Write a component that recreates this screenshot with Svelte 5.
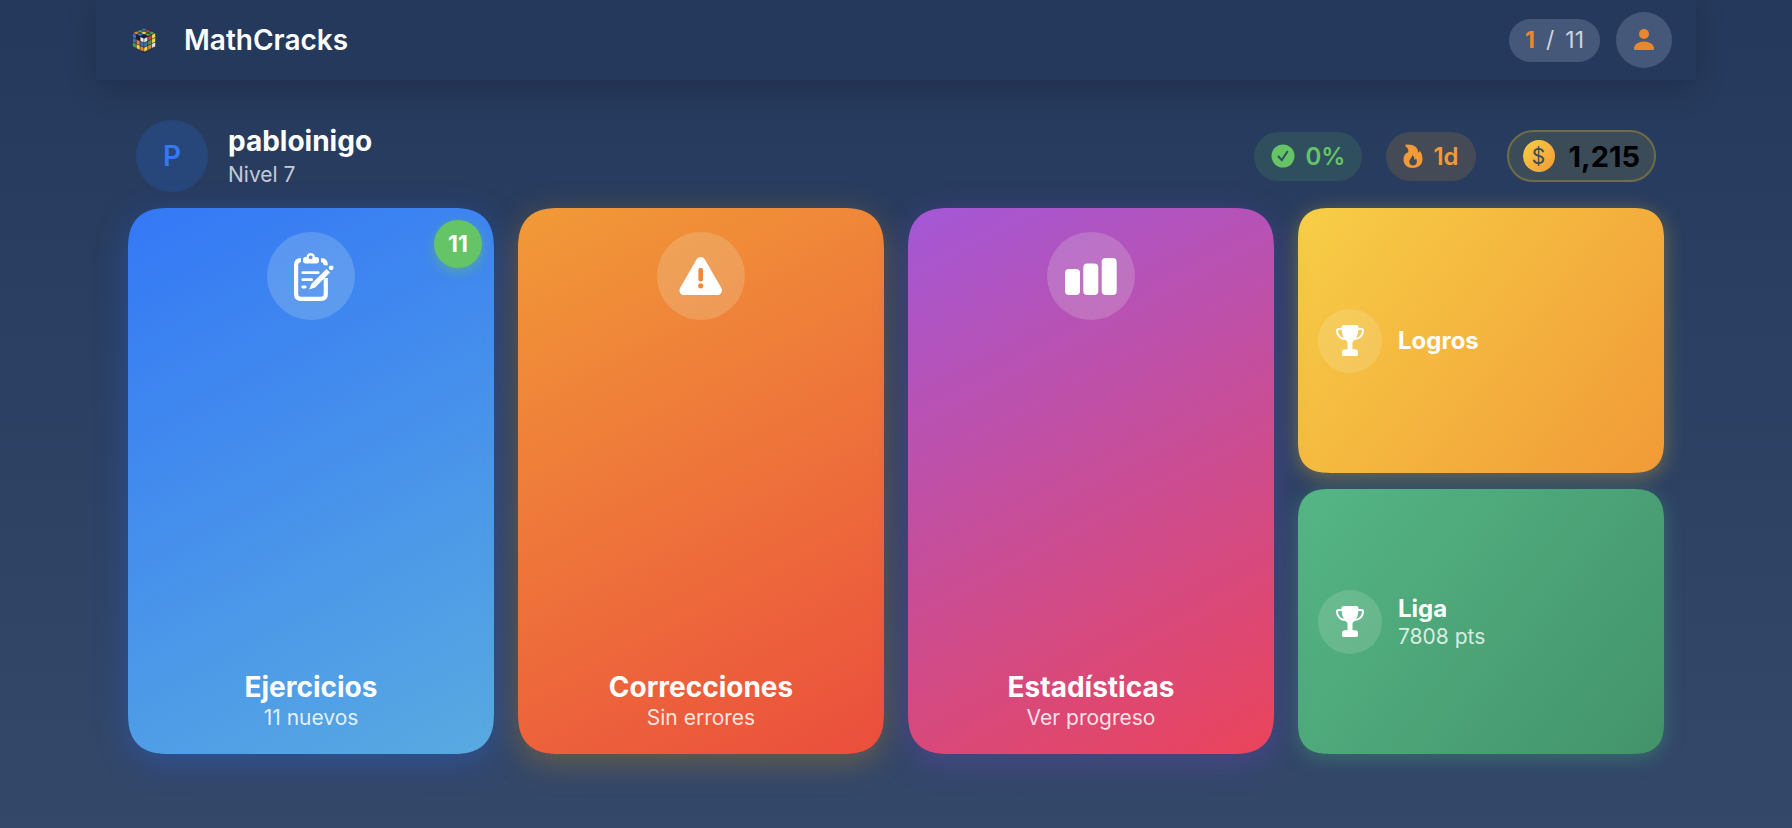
<script lang="ts">
  type Point = [number, number];

  const stickers = {
    blue: '#3b75b5',
    green: '#4c9f4d',
    red: '#cf3e38',
    yellow: '#f3d84a',
    orange: '#e58338',
    white: '#e4e5ea',
    dark: '#15203a',
  };
  type Sticker = keyof typeof stickers;

  // Each face is an origin, two edge vectors and nine stickers, row by row.
  const faces: { origin: Point; u: Point; v: Point; colors: Sticker[] }[] = [
    {
      origin: [12, 0],
      u: [11.5, 5],
      v: [-11.5, 5],
      colors: ['blue', 'red', 'green', 'green', 'yellow', 'green', 'orange', 'blue', 'dark'],
    },
    {
      origin: [0.5, 5],
      u: [11.5, 5.5],
      v: [0, 13.5],
      colors: ['blue', 'dark', 'white', 'blue', 'orange', 'blue', 'green', 'yellow', 'orange'],
    },
    {
      origin: [12, 10.5],
      u: [11.5, -5.5],
      v: [0, 13.5],
      colors: ['white', 'red', 'yellow', 'blue', 'green', 'yellow', 'yellow', 'orange', 'white'],
    },
  ];

  function cell(face: (typeof faces)[number], i: number): string {
    const col = i % 3;
    const row = Math.floor(i / 3);
    const corners: Point[] = [[0, 0], [1, 0], [1, 1], [0, 1]];
    return corners
      .map(([a, b]) => {
        const s = (col + a) / 3;
        const t = (row + b) / 3;
        return `${face.origin[0] + face.u[0] * s + face.v[0] * t},${face.origin[1] + face.u[1] * s + face.v[1] * t}`;
      })
      .join(' ');
  }

  const cards = [
    { id: 'exercises', title: 'Ejercicios', note: '11 nuevos', badge: 11 },
    { id: 'corrections', title: 'Correcciones', note: 'Sin errores' },
    { id: 'stats', title: 'Estadísticas', note: 'Ver progreso' },
  ];

  const smallCards = [
    { id: 'awards', title: 'Logros', note: '' },
    { id: 'league', title: 'Liga', note: '7808 pts' },
  ];
</script>

<div class="page">
  <header class="topbar">
    <svg class="logo" viewBox="0 0 24 25" aria-hidden="true">
      <path d="M12 0 24 5v13l-12 7-12-7V5Z" fill="#15203a" shape-rendering="crispEdges" />
      {#each faces as face}
        {#each face.colors as color, i}
          <polygon points={cell(face, i)} fill={stickers[color]} stroke="#15203a" stroke-width="0.400" />
        {/each}
      {/each}
    </svg>
    <span class="brand">MathCracks</span>
    <div class="counter"><strong>1</strong><span>/</span><span>11</span></div>
    <button class="account" type="button" aria-label="Cuenta">
      <svg viewBox="0 0 20 22" aria-hidden="true">
        <circle cx="10" cy="5" r="5" />
        <path d="M0 19.500C0 15.500 4.500 12.500 10 12.500s10 3 10 7c0 1-.6 1.500-1.600 1.500H1.600C.6 21 0 20.500 0 19.500Z" />
      </svg>
    </button>
  </header>

  <main>
    <section class="profile">
      <div class="avatar">P</div>
      <div class="who">
        <h1>pabloinigo</h1>
        <p>Nivel 7</p>
      </div>
      <div class="pill pill--ok">
        <svg width="24" height="24" viewBox="0 0 24 24" aria-hidden="true">
          <circle cx="12" cy="12" r="11.500" fill="currentColor" />
          <path d="m7.500 12.500 3.200 3.700 5.600-8.400" fill="none" stroke="#2f4f5f" stroke-width="2" stroke-linecap="round" stroke-linejoin="round" />
        </svg>
        0%
      </div>
      <div class="pill pill--streak">
        <svg width="20" height="24" viewBox="0 0 20 24" aria-hidden="true">
          <path fill="currentColor" fill-rule="evenodd" d="M3.200.5C11 .2 15.500 3.800 15 8.500c1-.3 1.500-1 1.800-1.700C18.500 9 19.500 12 19.500 15c0 5.500-4 9-9.500 9S.5 20.500.5 15.500C.5 12 2 9.800 4.800 8.600 6.500 6.500 4.500 4.200 2.800 2.500 2 1.500 2.300.6 3.200.5ZM9.200 11c.3 2.300-2.900 4.200-2.900 7 0 2 1.500 3.400 3.700 3.400s3.900-1.400 3.900-3.700c0-1.300-.4-2.300-1-3.100-.3.800-.8 1.300-1.500 1.300.2-2-.7-3.900-2.200-4.900Z" />
        </svg>
        1d
      </div>
      <div class="coins">
        <span class="coin">$</span>
        1,215
      </div>
    </section>

    <nav class="grid">
      {#each cards as card}
        <a class="card card--{card.id}" href="#{card.id}">
          <span class="card__icon">
            <svg viewBox="0 0 88 88" aria-hidden="true">
              {#if card.id === 'exercises'}
                <g fill="none" stroke="#fff" stroke-width="4.200" stroke-linecap="butt">
                  <path d="M34 28.200c-3 0-4.900 1.800-4.900 5V62c0 3 1.800 4.900 4.900 4.900h20c3 0 4.800-1.800 4.800-4.900V46" />
                  <path d="M54 28.200c3 0 4.800 1.800 4.800 5" />
                </g>
                <g fill="none" stroke="#fff" stroke-width="2.800" stroke-linecap="round">
                  <path d="M35.700 40.700h15.500M35.700 47.700h9M35.700 55h2.500" />
                </g>
                <path fill="#fff" fill-rule="evenodd" d="M39.500 25c.3-2.500 1.900-4 4.200-4s4 1.500 4.300 4h1.500c1.600 0 2.500 1 2.500 2.500v1.500c0 1.600-1 2.500-2.500 2.500h-11c-1.500 0-2.500-.9-2.500-2.500v-1.500c0-1.500 1-2.500 2.500-2.500Zm4.200-1.600a1.900 1.900 0 1 0 0 3.800 1.900 1.900 0 0 0 0-3.800Z" />
                <path fill="#fff" d="m42.200 57.500 2.300-5.800 15-14.800 3.600 3.600-15 14.900Z" />
                <circle cx="64.200" cy="35.800" r="2.400" fill="#fff" />
              {:else if card.id === 'corrections'}
                <path fill="#fff" d="M39.500 27.500c1.900-3.300 6.500-3.300 8.400 0l16.300 28.200c2 3.400-.2 7.300-4 7.300h-33c-3.800 0-6-3.900-4-7.300Z" />
                <path class="mark" d="M43.700 38v9.300" />
                <circle class="dot" cx="43.700" cy="53.800" r="2.600" />
              {:else}
                <g fill="#fff">
                  <rect x="18" y="37" width="15" height="26" rx="4" />
                  <rect x="36.300" y="31.500" width="15" height="31.500" rx="4" />
                  <rect x="54.700" y="26" width="15" height="37" rx="4" />
                </g>
              {/if}
            </svg>
          </span>
          <span class="card__title">{card.title}</span>
          <span class="card__note">{card.note}</span>
          {#if card.badge}<span class="badge">{card.badge}</span>{/if}
        </a>
      {/each}

      <div class="stack">
        {#each smallCards as card}
          <a class="small small--{card.id}" href="#{card.id}">
            <span class="small__icon">
              <svg viewBox="0 0 64 64" aria-hidden="true">
                <path fill="none" stroke="#fff" stroke-width="2" stroke-linejoin="round" d="M25 20h-4.500c-1 0-1.500.6-1.500 1.500 0 4.500 3 8.500 8.500 8.500M39 20h4.500c1 0 1.500.6 1.500 1.500 0 4.500-3 8.500-8.500 8.500" />
                <path fill="#fff" d="M23.500 18c0-1.200 1-2 2.500-2h12c1.500 0 2.500.8 2.500 2 0 6.500-1.500 11.500-6 15v7.300H37c2 0 3 1.200 3 3v2c0 1-.6 1.700-1.600 1.700H25.600c-1 0-1.600-.7-1.600-1.700v-2c0-1.800 1-3 3-3h2.500V33c-4.500-3.500-6-8.500-6-15Z" />
              </svg>
            </span>
            <span class="small__text">
              <span class="small__title">{card.title}</span>
              {#if card.note}<span class="small__note">{card.note}</span>{/if}
            </span>
          </a>
        {/each}
      </div>
    </nav>
  </main>
</div>

<style>
  :global(body) {
    margin: 0;
  }
  .page {
    box-sizing: border-box;
    display: flex;
    flex-direction: column;
    min-height: 100vh;
    padding-bottom: 74px;
    background: linear-gradient(180deg, #25395c 0%, #34486a 100%);
    color: #fff;
    font-family: Inter, 'Liberation Sans', sans-serif;
  }
  .topbar {
    box-sizing: border-box;
    display: flex;
    align-items: center;
    width: 100%;
    max-width: 1600px;
    height: 80px;
    margin: 0 auto;
    padding: 0 24px 0 36px;
    background: #25395c;
    box-shadow: 0 8px 32px rgba(0, 0, 0, 0.2);
  }
  .logo {
    width: 24px;
    height: 25px;
  }
  .brand {
    margin: 0 auto 0 28px;
    font-size: 28px;
    font-weight: 600;
  }
  .counter {
    display: flex;
    align-items: center;
    gap: 11px;
    padding: 0 16px;
    height: 43px;
    border-radius: 22px;
    background: #455879;
    color: #ccd3de;
    font-size: 23px;
  }
  .counter strong {
    color: #e98630;
    font-weight: 700;
  }
  .account {
    display: grid;
    place-items: center;
    width: 56px;
    height: 56px;
    margin-left: 16px;
    padding: 0;
    border: 0;
    border-radius: 50%;
    background: #455879;
    cursor: pointer;
  }
  .account svg {
    width: 20px;
    height: 22px;
    fill: #e98630;
  }

  main {
    box-sizing: border-box;
    display: flex;
    flex: 1;
    flex-direction: column;
    gap: 16px;
    width: 100%;
    max-width: 1600px;
    margin: 0 auto;
    padding: 40px 32px 0;
  }
  .profile {
    display: flex;
    align-items: center;
    padding: 0 8px;
  }
  .avatar {
    display: grid;
    place-items: center;
    width: 72px;
    height: 72px;
    border-radius: 50%;
    background: #27477b;
    color: #3478f6;
    font-size: 28px;
    font-weight: 600;
  }
  .who {
    margin: 0 auto 0 20px;
    padding-top: 4px;
  }
  h1,
  p {
    margin: 0;
  }
  h1 {
    font-size: 28px;
    line-height: 34px;
    font-weight: 700;
  }
  .who p {
    color: #c4cbd7;
    font-size: 21px;
    line-height: 34px;
  }
  .pill {
    display: flex;
    align-items: center;
    gap: 10px;
    height: 49px;
    padding: 0 17px;
    border-radius: 25px;
    font-size: 24px;
    font-weight: 600;
  }
  .pill--ok {
    background: #2f4f5f;
    color: #65c466;
  }
  .pill--streak {
    margin-left: 24px;
    background: #454b56;
    color: #f19a37;
  }
  .coins {
    box-sizing: border-box;
    display: flex;
    align-items: center;
    gap: 14px;
    height: 52px;
    margin-left: 31px;
    padding: 0 14px;
    border: 2px solid #6f6c46;
    border-radius: 26px;
    background: #3b4b58;
    color: #000;
    font-size: 29px;
    font-weight: 700;
  }
  .coin {
    display: grid;
    place-items: center;
    width: 32px;
    height: 32px;
    border-radius: 50%;
    background: linear-gradient(135deg, #f7ce46, #f19a37);
    color: #3b4b58;
    font-size: 21px;
    font-weight: 400;
  }

  .grid {
    display: grid;
    flex: 1;
    grid-template-columns: repeat(4, minmax(0, 1fr));
    gap: 24px;
  }
  a {
    color: inherit;
    text-decoration: none;
  }
  .card {
    position: relative;
    display: flex;
    flex-direction: column;
    align-items: center;
    padding: 24px;
    border-radius: 34px;
  }
  .card--exercises {
    background: linear-gradient(152deg, #3478f6, #59aae1);
    box-shadow: 0 8px 32px rgba(40, 100, 220, 0.4);
  }
  .card--corrections {
    --accent: #ee8a3a;
    background: linear-gradient(152deg, #f19a37, #eb4e3d);
    box-shadow: 0 8px 32px rgba(190, 130, 30, 0.4);
  }
  .card--stats {
    background: linear-gradient(152deg, #a357d7, #eb445a);
    box-shadow: 0 8px 32px rgba(110, 70, 190, 0.4);
  }
  .card__icon {
    width: 88px;
    height: 88px;
    margin-bottom: auto;
    border-radius: 50%;
    background: rgba(240, 255, 235, 0.18);
  }
  .card__icon svg,
  .small__icon svg {
    display: block;
  }
  .mark {
    stroke: var(--accent);
    stroke-width: 4.6px;
    stroke-linecap: round;
  }
  .dot {
    fill: var(--accent);
  }
  .card__title {
    font-size: 28px;
    line-height: 34px;
    font-weight: 700;
  }
  .card__note {
    margin-top: 2px;
    color: rgba(255, 255, 255, 0.85);
    font-size: 21px;
    line-height: 24px;
  }
  .badge {
    position: absolute;
    top: 12px;
    right: 12px;
    display: grid;
    place-items: center;
    width: 48px;
    height: 48px;
    border-radius: 50%;
    background: #65c466;
    box-shadow: 0 4px 12px rgba(101, 196, 102, 0.5);
    font-size: 23px;
    font-weight: 700;
  }

  .stack {
    display: grid;
    grid-template-rows: 1fr 1fr;
    gap: 16px;
  }
  .small {
    display: flex;
    align-items: center;
    gap: 16px;
    padding: 20px;
    border-radius: 26px;
  }
  .small--awards {
    background: linear-gradient(128deg, #f7ce46, #f19a37);
    box-shadow: 0 4px 20px rgba(220, 180, 50, 0.4);
  }
  .small--league {
    background: linear-gradient(128deg, #55b685, #43936a);
    box-shadow: 0 4px 20px rgba(70, 170, 120, 0.4);
  }
  /* Rounder, iOS-like corners where the browser can draw them. */
  @supports (corner-shape: squircle) {
    .card {
      border-radius: 42px;
      corner-shape: superellipse(1.4);
    }
    .small {
      border-radius: 32px;
      corner-shape: superellipse(1.4);
    }
  }
  .small__icon {
    width: 64px;
    height: 64px;
    border-radius: 50%;
    background: rgba(245, 255, 235, 0.15);
  }
  .small__text {
    display: flex;
    flex-direction: column;
  }
  .small__title {
    font-size: 24px;
    line-height: 30px;
    font-weight: 700;
  }
  .small__note {
    color: rgba(255, 255, 255, 0.8);
    font-size: 21px;
    line-height: 26px;
  }
</style>
